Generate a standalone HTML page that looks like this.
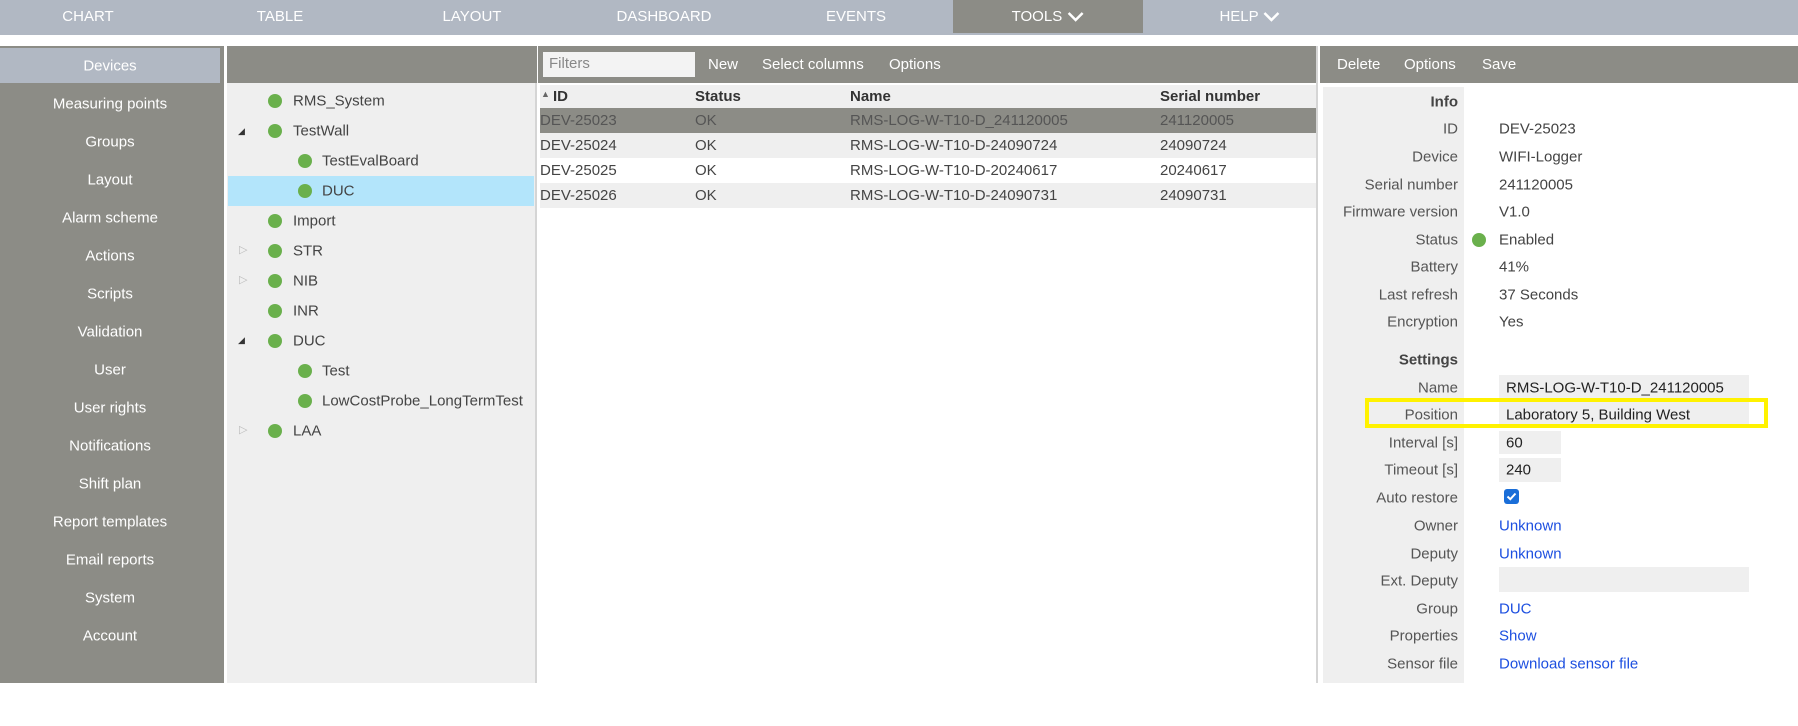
<!DOCTYPE html>
<html><head><meta charset="utf-8"><style>
*{margin:0;padding:0;box-sizing:border-box}
body{width:1798px;height:726px;background:#fff;font-family:"Liberation Sans",sans-serif;font-size:15px;color:#444;position:relative;overflow:hidden}
.a{position:absolute;white-space:nowrap}
#nav{left:0;top:0;width:1798px;height:35px;background:#b1b8c3}
.nv{position:absolute;top:0;height:35px;line-height:33px;color:#fff;font-size:15px;transform:translateX(-50%)}
#side{left:0;top:46px;width:224px;height:637px;background:#8c8c86}
.si{position:absolute;left:0;width:220px;text-align:center;color:#fff;transform:translateY(-50%)}
.hd{background:#8c8c86;height:37px;top:46px}
.dot{position:absolute;width:14px;height:14px;border-radius:50%;background:#6ab04c}
.tr{position:absolute;transform:translateY(-50%);color:#444}
.lb{position:absolute;right:340px;transform:translateY(-50%);color:#555;text-align:right}
.vl{position:absolute;left:1499px;transform:translateY(-50%);color:#444}
.lk{color:#1d4fe0}
.box{position:absolute;background:#efefef}
</style></head><body>
<div id="nav" class="a">
<div class="nv" style="left:88px">CHART</div>
<div class="nv" style="left:280px">TABLE</div>
<div class="nv" style="left:472px">LAYOUT</div>
<div class="nv" style="left:664px">DASHBOARD</div>
<div class="nv" style="left:856px">EVENTS</div>
<div style="position:absolute;left:953px;top:0;width:190px;height:33px;background:#8c8c86"></div>
<div class="nv" style="left:1048px">TOOLS <svg width="18" height="12" viewBox="0 0 18 12" style="vertical-align:middle"><path d="M2 2 L9 9 L16 2" stroke="#fff" stroke-width="2.5" fill="none"/></svg></div>
<div class="nv" style="left:1250px">HELP <svg width="18" height="12" viewBox="0 0 18 12" style="vertical-align:middle"><path d="M2 2 L9 9 L16 2" stroke="#fff" stroke-width="2.5" fill="none"/></svg></div>
</div>

<div id="side" class="a"></div>
<div class="a" style="left:0;top:48px;width:220px;height:35px;background:#b1b8c3"></div>
<div class="si" style="top:66px">Devices</div>
<div class="si" style="top:104px">Measuring points</div>
<div class="si" style="top:142px">Groups</div>
<div class="si" style="top:180px">Layout</div>
<div class="si" style="top:218px">Alarm scheme</div>
<div class="si" style="top:256px">Actions</div>
<div class="si" style="top:294px">Scripts</div>
<div class="si" style="top:332px">Validation</div>
<div class="si" style="top:370px">User</div>
<div class="si" style="top:408px">User rights</div>
<div class="si" style="top:446px">Notifications</div>
<div class="si" style="top:484px">Shift plan</div>
<div class="si" style="top:522px">Report templates</div>
<div class="si" style="top:560px">Email reports</div>
<div class="si" style="top:598px">System</div>
<div class="si" style="top:636px">Account</div>

<!-- tree -->
<div class="a" style="left:227px;top:46px;width:310px;height:637px;background:#efefef;border-right:2px solid #d5d5d5"></div>
<div class="a hd" style="left:227px;width:310px"></div>
<div class="a" style="left:228px;top:176px;width:306px;height:30px;background:#b3e5fb"></div>
<div class="dot" style="left:268px;top:94px"></div><div class="tr" style="left:293px;top:101px">RMS_System</div>
<div class="a" style="left:238px;top:126px;font-size:9px;color:#333">◢</div>
<div class="dot" style="left:268px;top:124px"></div><div class="tr" style="left:293px;top:131px">TestWall</div>
<div class="dot" style="left:298px;top:154px"></div><div class="tr" style="left:322px;top:161px">TestEvalBoard</div>
<div class="dot" style="left:298px;top:184px"></div><div class="tr" style="left:322px;top:191px">DUC</div>
<div class="dot" style="left:268px;top:214px"></div><div class="tr" style="left:293px;top:221px">Import</div>
<div class="a" style="left:239px;top:243px;font-size:11px;color:#bbb">▷</div>
<div class="dot" style="left:268px;top:244px"></div><div class="tr" style="left:293px;top:251px">STR</div>
<div class="a" style="left:239px;top:273px;font-size:11px;color:#bbb">▷</div>
<div class="dot" style="left:268px;top:274px"></div><div class="tr" style="left:293px;top:281px">NIB</div>
<div class="dot" style="left:268px;top:304px"></div><div class="tr" style="left:293px;top:311px">INR</div>
<div class="a" style="left:238px;top:335px;font-size:9px;color:#333">◢</div>
<div class="dot" style="left:268px;top:334px"></div><div class="tr" style="left:293px;top:341px">DUC</div>
<div class="dot" style="left:298px;top:364px"></div><div class="tr" style="left:322px;top:371px">Test</div>
<div class="dot" style="left:298px;top:394px"></div><div class="tr" style="left:322px;top:401px">LowCostProbe_LongTermTest</div>
<div class="a" style="left:239px;top:423px;font-size:11px;color:#bbb">▷</div>
<div class="dot" style="left:268px;top:424px"></div><div class="tr" style="left:293px;top:431px">LAA</div>

<!-- table -->
<div class="a" style="left:538px;top:46px;width:780px;height:637px;border-right:2px solid #d5d5d5"></div>
<div class="a hd" style="left:538px;width:778px"></div>
<div class="a" style="left:543px;top:52px;width:152px;height:25px;background:#f3f3f3;color:#888;padding:3px 6px">Filters</div>
<div class="a" style="left:708px;top:56px;color:#fff">New</div>
<div class="a" style="left:762px;top:56px;color:#fff">Select columns</div>
<div class="a" style="left:889px;top:56px;color:#fff">Options</div>
<div class="a" style="left:540px;top:85px;width:776px;height:23px;background:#efefef"></div>
<div class="a" style="left:540px;top:108px;width:776px;height:25px;background:#8c8c86"></div>
<div class="a" style="left:540px;top:133px;width:776px;height:25px;background:#efefef"></div>
<div class="a" style="left:540px;top:183px;width:776px;height:25px;background:#efefef"></div>
<div class="a" style="left:541px;top:89px;font-size:9px;color:#666">▲</div>
<div class="a" style="left:553px;top:88px;font-weight:bold;color:#333">ID</div>
<div class="a" style="left:695px;top:88px;font-weight:bold;color:#333">Status</div>
<div class="a" style="left:850px;top:88px;font-weight:bold;color:#333">Name</div>
<div class="a" style="left:1160px;top:88px;font-weight:bold;color:#333">Serial number</div>
<div class="a" style="left:540px;top:112px;color:#555">DEV-25023</div><div class="a" style="left:695px;top:112px;color:#555">OK</div><div class="a" style="left:850px;top:112px;color:#555">RMS-LOG-W-T10-D_241120005</div><div class="a" style="left:1160px;top:112px;color:#555">241120005</div>
<div class="a" style="left:540px;top:137px">DEV-25024</div><div class="a" style="left:695px;top:137px">OK</div><div class="a" style="left:850px;top:137px">RMS-LOG-W-T10-D-24090724</div><div class="a" style="left:1160px;top:137px">24090724</div>
<div class="a" style="left:540px;top:162px">DEV-25025</div><div class="a" style="left:695px;top:162px">OK</div><div class="a" style="left:850px;top:162px">RMS-LOG-W-T10-D-20240617</div><div class="a" style="left:1160px;top:162px">20240617</div>
<div class="a" style="left:540px;top:187px">DEV-25026</div><div class="a" style="left:695px;top:187px">OK</div><div class="a" style="left:850px;top:187px">RMS-LOG-W-T10-D-24090731</div><div class="a" style="left:1160px;top:187px">24090731</div>

<!-- details -->
<div class="a hd" style="left:1320px;width:478px"></div>
<div class="a" style="left:1337px;top:56px;color:#fff">Delete</div>
<div class="a" style="left:1404px;top:56px;color:#fff">Options</div>
<div class="a" style="left:1482px;top:56px;color:#fff">Save</div>
<div class="a" style="left:1323px;top:87px;width:141px;height:596px;background:#efefef"></div>
<div class="lb" style="top:102px;font-weight:bold;color:#444">Info</div>
<div class="lb" style="top:129px">ID</div><div class="vl" style="top:129px">DEV-25023</div>
<div class="lb" style="top:157px">Device</div><div class="vl" style="top:157px">WIFI-Logger</div>
<div class="lb" style="top:185px">Serial number</div><div class="vl" style="top:185px">241120005</div>
<div class="lb" style="top:212px">Firmware version</div><div class="vl" style="top:212px">V1.0</div>
<div class="lb" style="top:240px">Status</div><div class="dot" style="left:1472px;top:233px"></div><div class="vl" style="top:240px">Enabled</div>
<div class="lb" style="top:267px">Battery</div><div class="vl" style="top:267px">41%</div>
<div class="lb" style="top:295px">Last refresh</div><div class="vl" style="top:295px">37 Seconds</div>
<div class="lb" style="top:322px">Encryption</div><div class="vl" style="top:322px">Yes</div>
<div class="lb" style="top:360px;font-weight:bold;color:#444">Settings</div>
<div class="box" style="left:1499px;top:375px;width:250px;height:25px"></div>
<div class="box" style="left:1499px;top:402px;width:250px;height:24px"></div>
<div class="box" style="left:1499px;top:431px;width:62px;height:23px"></div>
<div class="box" style="left:1499px;top:458px;width:62px;height:24px"></div>
<div class="box" style="left:1499px;top:567px;width:250px;height:25px"></div>
<div class="lb" style="top:388px">Name</div><div class="vl" style="top:388px;left:1506px;color:#222">RMS-LOG-W-T10-D_241120005</div>
<div class="lb" style="top:415px">Position</div><div class="vl" style="top:415px;left:1506px;color:#222">Laboratory 5, Building West</div>
<div class="a" style="left:1365px;top:398px;width:403px;height:30px;border:4px solid #fff200"></div>
<div class="lb" style="top:443px">Interval [s]</div><div class="vl" style="top:443px;left:1506px;color:#222">60</div>
<div class="lb" style="top:470px">Timeout [s]</div><div class="vl" style="top:470px;left:1506px;color:#222">240</div>
<div class="lb" style="top:498px">Auto restore</div>
<div class="a" style="left:1504px;top:489px;width:15px;height:15px;background:#1a6ed8;border-radius:3px"><svg width="15" height="15" viewBox="0 0 15 15"><path d="M3.5 7.5 L6.3 10.2 L11.5 4.5" stroke="#fff" stroke-width="2" fill="none"/></svg></div>
<div class="lb" style="top:526px">Owner</div><div class="vl lk" style="top:526px">Unknown</div>
<div class="lb" style="top:554px">Deputy</div><div class="vl lk" style="top:554px">Unknown</div>
<div class="lb" style="top:581px">Ext. Deputy</div>
<div class="lb" style="top:609px">Group</div><div class="vl lk" style="top:609px">DUC</div>
<div class="lb" style="top:636px">Properties</div><div class="vl lk" style="top:636px">Show</div>
<div class="lb" style="top:664px">Sensor file</div><div class="vl lk" style="top:664px">Download sensor file</div>
</body></html>
